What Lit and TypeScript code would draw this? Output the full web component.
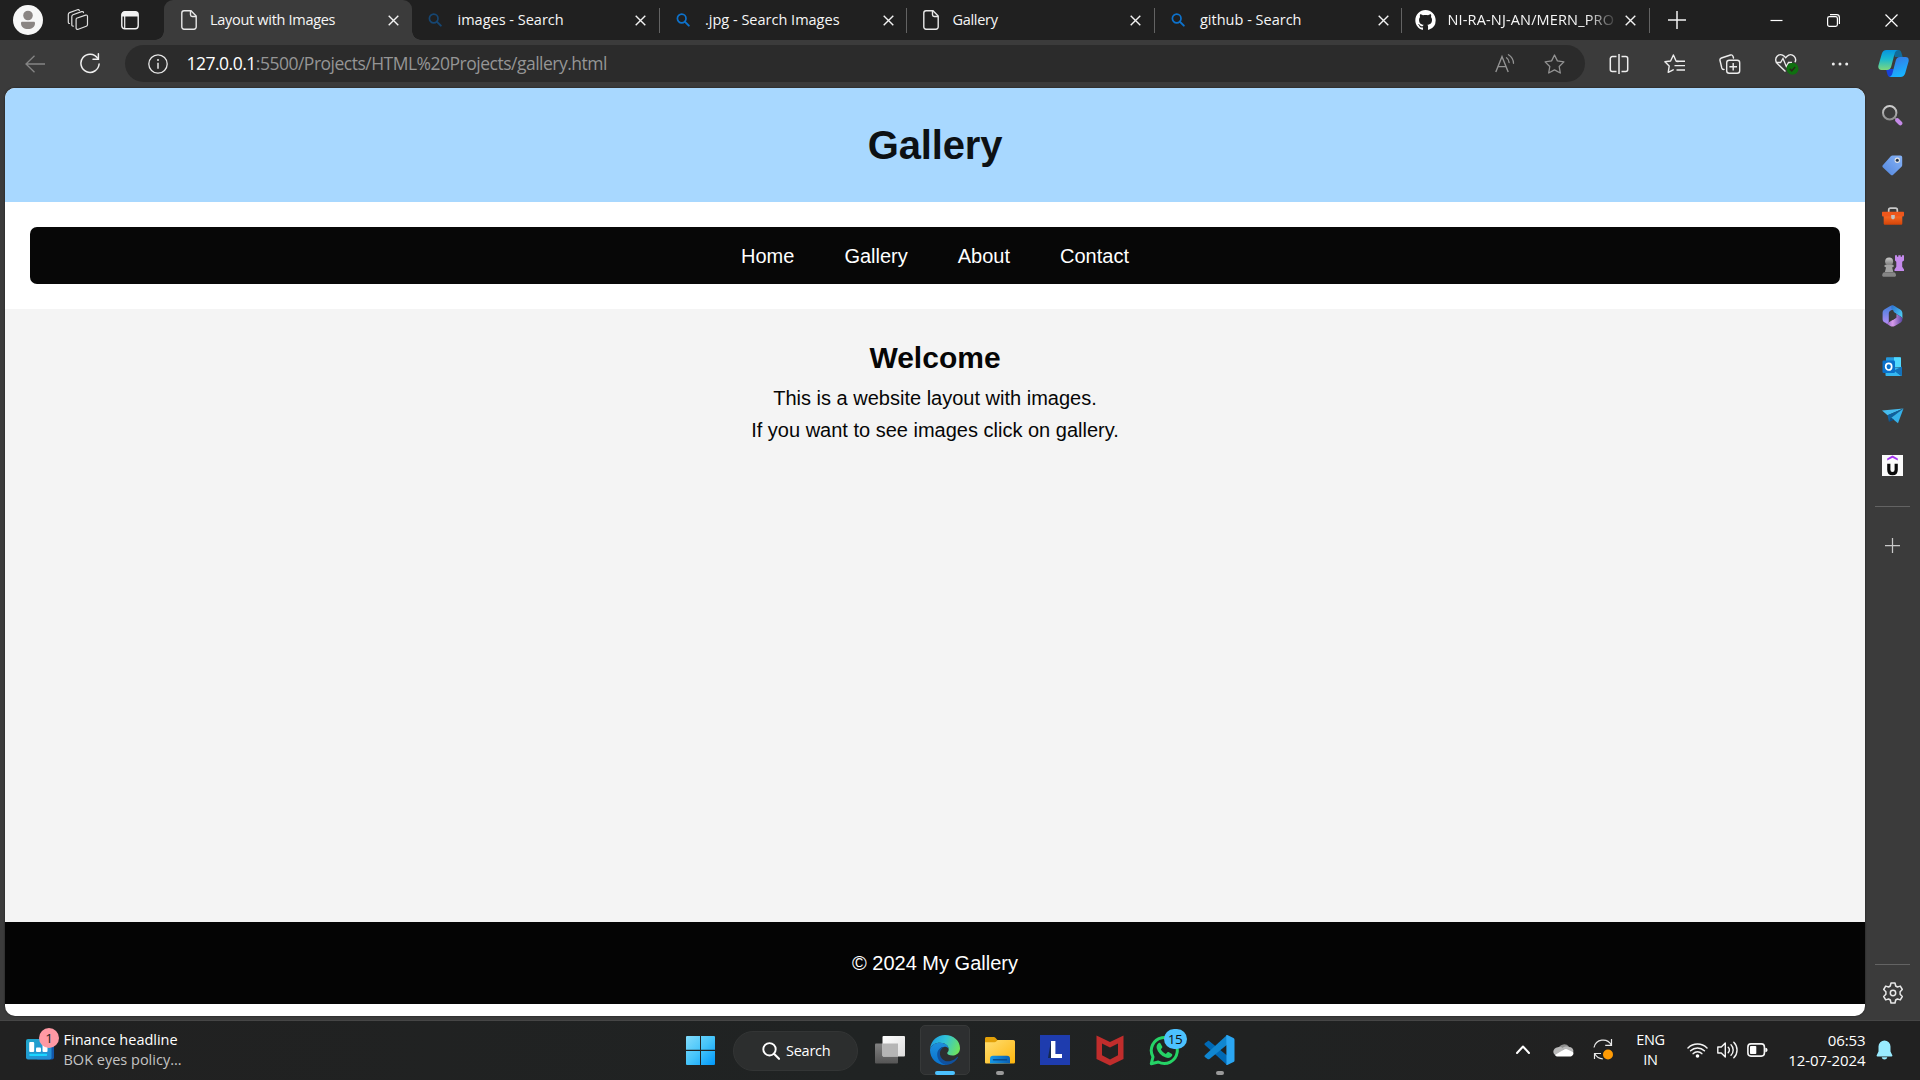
import { LitElement, html, svg, css, type TemplateResult } from "lit";
import { customElement } from "lit/decorators.js";

const icon = (w: number, h: number, body: TemplateResult) =>
  html`<svg class="icon" width=${w} height=${h} viewBox="0 0 ${w} ${h}" fill="none">${body}</svg>`;

/* ---------- tab strip ---------- */
const avatar = icon(30, 30, svg`<circle cx="15" cy="15" r="15" fill="#f7f7f7"/><circle cx="15" cy="10.5" r="4.8" fill="#8a8583"/><path d="M8 18.2c0-.9.6-1.4 1.4-1.4h11.2c.8 0 1.4.5 1.4 1.4 0 3.9-3 5.8-7 5.8s-7-1.9-7-5.8z" fill="#8a8583"/>`);
const workspaces = icon(22, 22, svg`<g stroke="#dedede" stroke-width="1.2" stroke-linejoin="round" stroke-linecap="round"><path d="M9.6 9.2l9-3.1c1-.3 1.9.1 1.9 1.2v8.2c0 .8-.4 1.4-1.2 1.7l-8 3c-1.2.4-2.2 0-2.2-1.2v-8.2c0-.8 0-1.4.5-1.6z"/><path d="M6.3 17.2c-1 .1-1.5-.4-1.5-1.3V7.8c0-1 .3-1.6 1.200-2l8.500-3.200c1-.3 1.800.1 2 1"/><path d="M2.500 14.500c-.8 0-1.200-.5-1.200-1.300V5.500c0-1 .4-1.600 1.200-1.900l8-2.900c.9-.3 1.600 0 1.900.8"/></g>`);
const tabMenu = icon(18, 19, svg`<rect x=".8" y=".8" width="16.400" height="17" rx="3" stroke="#f2f2f2" stroke-width="1.400"/><path d="M.8 3.800a3 3 0 0 1 3-3h10.400a3 3 0 0 1 3 3v1.700H.8z" fill="#f2f2f2"/><path d="M3.700 5v12" stroke="#f2f2f2" stroke-width="1.200"/>`);
const filePage = icon(16, 20, svg`<path d="M3 .8h7L15.200 6v11a2.200 2.200 0 0 1-2.200 2.200H3A2.200 2.200 0 0 1 .8 17V3A2.200 2.200 0 0 1 3 .8z" stroke="#e8e8e8" stroke-width="1.400"/><path d="M9.500 1v3.800c0 1 .6 1.700 1.700 1.700H15" stroke="#e8e8e8" stroke-width="1.400"/>`);
const bing = (c: string) => icon(14, 14, svg`<circle cx="5.700" cy="5.500" r="4.300" stroke=${c} stroke-width="1.700"/><path d="M8.800 8.600l4 4" stroke=${c} stroke-width="2" stroke-linecap="round"/>`);
const github = html`<svg class="icon" width="21" height="20" viewBox="0 0 16 15.700" fill="#fff"><path d="M8 0C3.580 0 0 3.580 0 8c0 3.540 2.290 6.530 5.470 7.590.4.070.55-.17.55-.38 0-.19-.01-.82-.01-1.490-2.010.37-2.530-.49-2.690-.94-.09-.23-.48-.94-.82-1.130-.28-.15-.68-.52-.01-.53.63-.01 1.080.58 1.230.82.72 1.210 1.870.87 2.330.66.07-.52.28-.87.51-1.070-1.780-.2-3.640-.89-3.640-3.950 0-.87.31-1.590.82-2.150-.08-.2-.36-1.020.08-2.120 0 0 .67-.21 2.200.82.64-.18 1.320-.27 2-.27s1.360.09 2 .27c1.530-1.040 2.200-.82 2.200-.82.44 1.100.16 1.920.08 2.120.51.56.82 1.270.82 2.150 0 3.070-1.870 3.750-3.650 3.950.29.25.54.73.54 1.480 0 1.070-.01 1.930-.01 2.200 0 .21.15.46.55.38A8.010 8.010 0 0 0 16 8c0-4.420-3.580-8-8-8z"/></svg>`;
const closeX = icon(11, 11, svg`<path d="M.7.7l9.600 9.600M10.300.7L.7 10.300" stroke="#f2f2f2" stroke-width="1.400"/>`);
const plus = (s: number, c: string) => html`<svg class="icon" width=${s} height=${s} viewBox="0 0 18 18"><path d="M9 0v18M0 9h18" stroke=${c} stroke-width="1.500"/></svg>`;
const minimise = icon(13, 13, svg`<path d="M.5 6.500h12" stroke="#fff" stroke-width="1.200"/>`);
const restore = icon(13, 13, svg`<rect x=".6" y="2.600" width="9.800" height="9.800" rx="1.800" stroke="#fff" stroke-width="1.200"/><path d="M3 .6h6.600a2.800 2.800 0 0 1 2.800 2.800V10" stroke="#fff" stroke-width="1.200"/>`);
const closeWin = icon(13, 13, svg`<path d="M.5.5l12 12M12.500.5l-12 12" stroke="#fff" stroke-width="1.200"/>`);

/* ---------- toolbar ---------- */
const back = icon(20, 18, svg`<path d="M9.500.7L1 9l8.500 8.300M1 9h19" stroke="#858585" stroke-width="1.300"/>`);
const reload = icon(20, 21, svg`<path d="M17.600 5.200A9.100 9.100 0 1 0 19.100 11" stroke="#f0f0f0" stroke-width="1.500" stroke-linecap="round"/><path d="M18.400.8v5.400H13" stroke="#f0f0f0" stroke-width="1.500" stroke-linecap="round"/>`);
const info = icon(20, 20, svg`<circle cx="10" cy="10" r="9.200" stroke="#e6e6e6" stroke-width="1.300"/><path d="M10 8.800v6" stroke="#e6e6e6" stroke-width="1.500"/><circle cx="10" cy="6" r="1" fill="#e6e6e6"/>`);
const readAloud = icon(20, 19, svg`<path d="M.8 18L7 2.600 13.200 18M2.900 12.600h8.200" stroke="#939393" stroke-width="1.400"/><path d="M11.500 3.800a6 6 0 0 1 2.600 4.700M13.500.7a10.500 10.500 0 0 1 5 8.600" stroke="#939393" stroke-width="1.300" stroke-linecap="round"/>`);
const star = icon(21, 20, svg`<path d="M10.500 1l2.900 5.900 6.500 1-4.700 4.600 1.100 6.500-5.800-3.100L4.700 19l1.100-6.500L1.100 7.900l6.500-1z" stroke="#939393" stroke-width="1.300" stroke-linejoin="round"/>`);
const split = icon(20, 20, svg`<path d="M7.500 2.600H3.300A2 2 0 0 0 1.300 4.600v10.800a2 2 0 0 0 2 2h4.200M12.500 2.600h4.200a2 2 0 0 1 2 2v10.800a2 2 0 0 1-2 2h-4.200M10 0v20" stroke="#ededed" stroke-width="1.500"/>`);
const favourites = icon(22, 20, svg`<path d="M14.200 7.500l-2-.3L9.400 1 6.600 7 .9 7.800l4.300 4.300-1 6.300 5-2.600" stroke="#ededed" stroke-width="1.400" stroke-linejoin="round" stroke-linecap="round"/><path d="M12.500 7.200h8.500M10.500 11.600h10.500M12.500 16h8.500" stroke="#ededed" stroke-width="1.400"/>`);
const collections = icon(22, 20, svg`<rect x="7.700" y="6.300" width="13" height="13" rx="2.500" stroke="#ededed" stroke-width="1.400"/><path d="M14.200 9v7.600M10.400 12.800H18" stroke="#ededed" stroke-width="1.400"/><path d="M5 15.400c-1.200.2-1.900-.3-2.200-1.400L1 6.500C.7 5.200 1.200 4.400 2.400 4L11.500 1c1.200-.4 2 .1 2.500 1.200l.5 1.800" stroke="#ededed" stroke-width="1.400" stroke-linecap="round"/>`);
const essentials = icon(24, 22, svg`<path d="M10.500 18.500L2.300 10.600a5.200 5.200 0 0 1-.2-7.300c2-2 5.100-2.100 7.200 0l1.400 1.400 1.400-1.400c2-2 5-2 7 0a5.200 5.200 0 0 1 .9 6" stroke="#ededed" stroke-width="1.400"/><path d="M.8 9.500h4.800l2.400-4 3.300 8 2.200-4h3.500" stroke="#ededed" stroke-width="1.300"/><circle cx="17.500" cy="15.800" r="6" fill="#0f7010"/><path d="M14.900 15.900l1.900 1.900 3.300-3.700" stroke="#29281b" stroke-width="1.500"/>`);
const dots = icon(18, 4, svg`<g fill="#ededed"><circle cx="2.300" cy="2" r="1.500"/><circle cx="9" cy="2" r="1.500"/><circle cx="15.700" cy="2" r="1.500"/></g>`);
const copilot = icon(31, 27, svg`<defs><linearGradient id="ca" x1="0" y1="0" x2="0" y2="1"><stop stop-color="#0794df"/><stop offset=".45" stop-color="#19b9d0"/><stop offset="1" stop-color="#7ed87c"/></linearGradient><linearGradient id="cb" x1="0" y1="0" x2=".4" y2="1"><stop stop-color="#3a71df"/><stop offset="1" stop-color="#18b2ff"/></linearGradient></defs><path d="M14 0h6.500c2 0 2.600 1.500 3 3l1.200 4H17z" fill="#116b9a"/><path d="M8 19h8l-1.500 8h-2.200c-2 0-2.600-1.500-3-3z" fill="#1741d8"/><path d="M8.500 0H20c-2.200.4-3 2-3.500 4l-3.200 12.200C12.700 18.500 11.500 20 9 20H3.500C.8 20-.2 18 .5 15.200L3.800 3.800C4.500 1.400 6 0 8.500 0z" fill="url(#ca)"/><path d="M22 7h5.500c2.700 0 3.700 2 3 4.800l-3.300 11.400C26.500 25.600 25 27 22.500 27H11c2.200-.4 3-2 3.500-4l3.200-12.200C18.300 8.500 19.500 7 22 7z" fill="url(#cb)"/>`);

/* ---------- sidebar ---------- */
const sbSearch = icon(21, 21, svg`<defs><linearGradient id="sg" x1="0" y1="0" x2="0" y2="1"><stop stop-color="#cfcfcf"/><stop offset="1" stop-color="#8e8e8e"/></linearGradient></defs><circle cx="7.700" cy="7.700" r="6.700" stroke="url(#sg)" stroke-width="2"/><path d="M12.800 12.800l2 2" stroke="#8a8a8a" stroke-width="1.600"/><path d="M15.300 15.300l3 3" stroke="#c58ae8" stroke-width="4.200" stroke-linecap="round"/>`);
const sbTag = icon(21, 21, svg`<defs><linearGradient id="tg" x1="1" y1="0" x2="0" y2="1"><stop stop-color="#87b3f6"/><stop offset="1" stop-color="#5286dd"/></linearGradient></defs><path d="M10.500.5h7.700c1.300 0 2 .7 2 2V10c0 .7-.2 1.200-.7 1.700l-8.300 8c-.8.7-1.700.7-2.500 0L1 12.500c-.8-.8-.8-1.700 0-2.500l8-8.900c.4-.4.9-.6 1.500-.6z" fill="url(#tg)"/><circle cx="15.300" cy="5.200" r="2.700" fill="#e2e2e2"/><circle cx="15.300" cy="5.200" r="1.500" fill="#20334c"/>`);
const sbTools = icon(22, 18, svg`<defs><linearGradient id="bg" x1="0" y1="0" x2="0" y2="1"><stop stop-color="#fa6d28"/><stop offset="1" stop-color="#d34408"/></linearGradient></defs><path d="M6.700 5.500V3c0-1.200.6-1.800 1.800-1.800h5c1.200 0 1.800.6 1.800 1.800v2.500" stroke="#c9c9c9" stroke-width="1.700"/><path d="M1.700 8h18.600v8.500c0 .8-.5 1.300-1.300 1.300H3c-.8 0-1.300-.5-1.300-1.300z" fill="url(#bg)"/><path d="M1 4.700h20c.7 0 1 .3 1 1v2.600c0 .8-.5 1.200-1.200 1.200H1.200C.5 9.500 0 9.100 0 8.300V5.700c0-.7.3-1 1-1z" fill="#ee571c"/><path d="M9.200 8h3.600v2.500c0 1-.8 1.800-1.800 1.800s-1.800-.8-1.800-1.800z" fill="#c4c4c4"/>`);
const sbGames = icon(22, 22, svg`<defs><linearGradient id="pg" x1="0" y1="0" x2="0" y2="1"><stop stop-color="#c9c9c9"/><stop offset="1" stop-color="#777"/></linearGradient></defs><path d="M13 .3h2v1.500h1.300V.3h2.400v1.500H20V.3h2v5.200l-1.800 1.200v5L22 14.500V16h-9.500v-1.500l1.800-2.800v-5L13 5.500z" fill="#c48aec"/><circle cx="7.100" cy="6.600" r="4" fill="url(#pg)"/><path d="M3.300 9.700h7.600c1.200 0 1.200 2.500 0 2.500h-.8l1.200 4.800H2.900l1.200-4.800h-.8c-1.200 0-1.200-2.500 0-2.500z" fill="#a2a2a2"/><path d="M2.700 17.300h8.800c1.700 0 2.500 1.500 2.500 3 0 .9-.4 1.400-1.200 1.400H1.400c-.8 0-1.200-.5-1.200-1.400 0-1.500.8-3 2.500-3z" fill="#858585"/>`);
const sbM365 = icon(21, 22, svg`<defs><linearGradient id="ma" x1="0" y1="0" x2="0" y2="1"><stop stop-color="#3f7fdc"/><stop offset="1" stop-color="#b18cf4"/></linearGradient><linearGradient id="mb" x1="0" y1="0" x2="1" y2="1"><stop stop-color="#2a6fd0"/><stop offset="1" stop-color="#52dcfb"/></linearGradient><linearGradient id="mc" x1="0" y1="0" x2="1" y2="0"><stop stop-color="#7a55c0"/><stop offset=".45" stop-color="#d79bea"/><stop offset="1" stop-color="#5a45a4"/></linearGradient></defs><path d="M10 .5c-.8 0-1.500.3-2.200.7L2.700 4.300C1.300 5.200.6 6.400.6 8v6c0 1.700.8 2.800 2.200 3.600l2 1c1.200-.2 2-1 2-2.200V8.500c0-1.200.5-2.100 1.500-2.700l6-3.300L12.300 1C11.600.6 10.800.5 10 .5z" fill="url(#ma)"/><path d="M9.500.6c1-.3 2 0 2.800.4l5.900 3.500c1.500.9 2.200 2.200 2.200 3.800v6c0-1.200-.7-2.200-1.800-2.900l-5-2.900c-1.300-.8-2-1.500-2.200-3L9.300 4z" fill="url(#mb)"/><path d="M2.800 17.600c1.200.6 2.500.5 3.700-.2l6.200-3.700c1-.6 1.400-1.400 1.400-2.600V9l4.500 2.500c2.500 1.500 2.300 4.700-.2 6.200l-5.600 3.200c-1.600.9-3 .9-4.600 0z" fill="url(#mc)"/><path d="M7 9l4-2.300 3.400 2.100v4L10.600 15 7 12.900z" fill="#3b3b3b"/>`);
const sbOutlook = icon(21, 21, svg`<path d="M5 1.200h13a1 1 0 0 1 1 1V11H4V2.200a1 1 0 0 1 1-1z" fill="#2499de"/><path d="M12 1.200h6a1 1 0 0 1 1 1V11h-7z" fill="#50d9ff"/><path d="M3.500 11L20 11.500v7a1.500 1.500 0 0 1-1.500 1.500h-14c-.6 0-1-.5-1-1z" fill="#32b6ee"/><path d="M20 10.500v8c0 .8-.6 1.500-1.500 1.500L12 14.500z" fill="#1372bb"/><path d="M3.500 20l8.500-4.500 7 4.500z" fill="#35b8f1"/><rect x=".5" y="4.500" width="12.500" height="12.500" rx="1.300" fill="#0a70ca"/><ellipse cx="6.700" cy="10.700" rx="3" ry="3.300" stroke="#fff" stroke-width="1.700"/>`);
const sbTelegram = icon(22, 16, svg`<path d="M21.500.5L0 2.500l5.500 4.700z" fill="#45bcef"/><path d="M21.500.5L5.500 7.200 7 14l2.200-4.300z" fill="#0e609f"/><path d="M21.500.5L9.200 9.700 16 15.200z" fill="#35b1ea"/><path d="M7 14l2.200-4.300 2.800 2z" fill="#0a4e88"/>`);
const sbUdemy = icon(21, 21, svg`<path d="M0 0h21v21H0z" fill="#fbfbfb"/><path d="M5.200 5.600V3.400L10.500.5l5.300 2.900v2.200l-5.300-2.800z" fill="#a435f0"/><path d="M6.800 8.800v6c0 2.300 1.400 3.900 3.700 3.900s3.700-1.600 3.700-3.900v-6" stroke="#0a0a0a" stroke-width="3.200"/>`);
const gear = icon(22, 22, svg`<path d="M9 1h4l.7 3 1.700 1 2.900-.9 2 3.400L18.100 9.700v2.600l2.200 2.200-2 3.400-2.900-.9-1.700 1L13 21H9l-.7-3-1.700-1-2.900.9-2-3.400 2.200-2.200V9.700L1.700 7.500l2-3.400 2.900.9 1.700-1z" stroke="#e8e8e8" stroke-width="1.500" stroke-linejoin="round"/><circle cx="11" cy="11" r="2.700" stroke="#e8e8e8" stroke-width="1.500"/>`);

/* ---------- taskbar ---------- */
const widgets = icon(29, 21, svg`<defs><linearGradient id="wa" x1="0" y1="0" x2="1" y2="1"><stop stop-color="#20a6c9"/><stop offset="1" stop-color="#238bd8"/></linearGradient></defs><rect x="10" y="1" width="18" height="19.500" rx="2" fill="#1257a8"/><rect x="0" y="0" width="25.500" height="20.500" rx="2" fill="url(#wa)"/><g fill="#fff"><rect x="3.200" y="3" width="5" height="10" rx="1"/><rect x="10" y="8.500" width="5" height="4.500" rx="1"/><rect x="16.500" y="4.500" width="5" height="8.500" rx="1"/></g><rect x="3.200" y="14.700" width="18" height="2.300" rx="1" fill="#1bd5ff"/>`);
const start = icon(29, 29, svg`<defs><linearGradient id="ws" gradientUnits="userSpaceOnUse" x1="0" y1="0" x2="29" y2="29"><stop stop-color="#83dcfb"/><stop offset=".5" stop-color="#45c4fa"/><stop offset="1" stop-color="#0098fa"/></linearGradient></defs><path d="M1 0h13v13.800H0V1a1 1 0 0 1 1-1zM15 0h13a1 1 0 0 1 1 1v12.800H15zM0 15h14v14H1a1 1 0 0 1-1-1zM15 15h14v13a1 1 0 0 1-1 1H15z" fill="url(#ws)"/>`);
const lens = icon(18, 18, svg`<circle cx="7.500" cy="7.300" r="6.200" stroke="#fff" stroke-width="1.900"/><path d="M12 11.800l5 5" stroke="#fff" stroke-width="2.100" stroke-linecap="round"/>`);
const taskView = icon(30, 28, svg`<defs><linearGradient id="tv" x1="0" y1="0" x2="1" y2="1"><stop stop-color="#fff"/><stop offset="1" stop-color="#dcdcdc"/></linearGradient><linearGradient id="tw" x1="0" y1="0" x2="0" y2="1"><stop stop-color="#818181"/><stop offset="1" stop-color="#555"/></linearGradient></defs><rect x="0" y="7.500" width="23" height="20" rx="1" fill="url(#tw)"/><rect x="7.500" y="0" width="22.500" height="20.500" rx="1" fill="url(#tv)"/><path d="M7.500 7.500H23v13H8.500a1 1 0 0 1-1-1z" fill="#b5b5b5"/>`);
const edge = html`<svg class="icon" width="30" height="30" viewBox="0 0 30 30"><defs>
  <linearGradient id="ea" x1="0" y1=".3" x2="1" y2=".6"><stop stop-color="#1b9de2"/><stop offset=".45" stop-color="#31c3d8"/><stop offset="1" stop-color="#6fe35c"/></linearGradient>
  <linearGradient id="eb" x1="0" y1="0" x2="0" y2="1"><stop stop-color="#1e8fdc"/><stop offset="1" stop-color="#0873cf"/></linearGradient></defs>
  <path d="M0 14C1 5.500 7.300 0 15 0c8.700 0 15 6 15 13.200 0 4.200-3.200 7.300-7.600 7.300-3.300 0-5.200-1.300-5.200-2.500 0-.8 1.500-1.300 1.500-3.600C18.700 10.500 15 7.700 10 7.700 5 7.700 1.200 10 0 14z" fill="url(#ea)"/>
  <path d="M0 15c.5-4.800 5.200-7.300 10-7.300 4.700 0 8.200 2.400 8.700 5.700-1-1-2.500-1.600-4-1.600-4 0-6.500 3.200-6.500 7.200 0 5.400 4 9.500 8.800 11h-2C6.700 30 0 23.500 0 15z" fill="url(#eb)"/>
  <path d="M14.200 11.900c-3 1.300-4.700 4-4.200 7.500.8 5 5.600 7.800 10.400 6.600 3-.7 5.300-2.200 6.800-4 .6-.7 1.200-.3.700.6C25.600 27 20.800 30 16.300 30 11.500 29.300 7.200 24.800 7.200 19.500c0-4.500 3.200-7.500 7-7.600z" fill="#10519e"/></svg>`;
const explorer = icon(30, 27, svg`<defs><linearGradient id="fa" x1="0" y1="0" x2="1" y2="1"><stop stop-color="#ffde72"/><stop offset="1" stop-color="#fdb50d"/></linearGradient><linearGradient id="fb" x1="0" y1="0" x2="1" y2="0"><stop stop-color="#1498e7"/><stop offset="1" stop-color="#0b60b4"/></linearGradient></defs><path d="M0 1.500C0 .6.600 0 1.500 0h7.300c.7 0 1.200.2 1.600.7l2 2.300h15.100c1.500 0 2.500 1 2.500 2.500V8H0z" fill="#e2a008"/><path d="M0 5.200h9.500c.7 0 1.200-.2 1.700-.7l1.500-1.500H28c1.300 0 2 .7 2 2v20c0 1-.6 1.600-1.600 1.600H1.600C.6 26.600 0 26 0 25z" fill="url(#fa)"/><path d="M5 26.600V22c0-2 1-3.200 3-3.200h14c2 0 3 1.200 3 3.200v4.600z" fill="url(#fb)"/><path d="M8.500 22.800h13" stroke="#084b8c" stroke-width="1.500" stroke-linecap="round"/>`);
const lenovo = icon(30, 30, svg`<path d="M0 0h30v30H0z" fill="#1e3cae"/><path d="M11 6l-3 17h7z" fill="#15294f"/><path d="M11 6h4.400v13H22v4H11z" fill="#fff"/>`);
const mcafee = icon(28, 31, svg`<path d="M.5.500L14 7 27.500.500V24L14 30.500.500 24z" fill="#c02d2c"/><path d="M6 8.500L14 12.400l8-3.900v11.800l-8 4.200-8-4.200z" fill="#212222"/>`);
const whatsapp = icon(31, 31, svg`<path d="M2.300 28.700L4 21.900A13 13 0 1 1 9.300 27z" stroke="#25d366" stroke-width="3" stroke-linejoin="round"/><path d="M9.400 8.200c.6-.6 1.400-.7 2 0l1.800 3.300c.3.600.1 1-.3 1.500l-1 1.300c1 2 2.600 3.500 4.900 4.600l1.500-1.400c.5-.5 1-.6 1.600-.2l3 1.700c.6.500.5 1.200 0 1.900-1.300 1.800-3.500 2.500-6 1.600-5-1.700-8-5-9.100-9-.6-2.200.2-4 1.600-5.300z" fill="#25d366"/>`);
const vscode = icon(31, 30, svg`<path d="M1.500 7.700l2-1.500c.7-.5 1.300-.4 2 .1L23 20.500V30L.9 10c-.9-.9-.4-1.500.6-2.300z" fill="#0069b5"/><path d="M1.500 22.500l2 1.500c.7.500 1.300.4 2-.1L23 9.700V0L.9 20.200c-.9.900-.4 1.500.6 2.300z" fill="#1086d0"/><path d="M22.300.2c.5-.3 1-.2 1.500 0l5.700 2.900c.7.300 1 .9 1 1.600v20.700c0 .7-.3 1.200-1 1.600l-5.700 2.800c-.7.300-1.300.2-1.800-.2L22.500 29z" fill="#2ba6f2"/>`);
const chevron = icon(14, 9, svg`<path d="M1 8l6-6.500L13 8" stroke="#fff" stroke-width="2" stroke-linecap="round" stroke-linejoin="round"/>`);
const cloud = icon(21, 14, svg`<path d="M5.500 5.500a6 6 0 0 1 10.500-1.700l-8 6z" fill="#8e8e8e"/><path d="M4.800 4.200A5 5 0 0 1 10.500 6l-5 6.600C2.500 13 .3 11.300.3 8.800c0-2.400 1.900-4.400 4.500-4.600z" fill="#b9b9b9"/><path d="M16 4c2.800 0 4.500 2 4.500 4.500L18 10 9 5.500C10.800 3.500 13.500 3 16 4z" fill="#b9b9b9"/><path d="M2 12l8.500-5.200a5 5 0 0 1 3.500-.6l6.300 3c.6 2.500-1.200 4.300-3.500 4.300H4.900C3.700 13.500 2.700 13 2 12z" fill="#fff"/>`);
const sync = icon(21, 21, svg`<path d="M1 8.500A9.300 9.300 0 0 1 18.300 6M18.500 0v6.300h-6.300M1.500 20v-5.500H8M1.800 14.800a9.300 9.300 0 0 0 8 5" stroke="#e8e8e8" stroke-width="1.200"/><circle cx="15" cy="15.500" r="5" fill="#ff9b05"/>`);
const wifi = icon(21, 16, svg`<g stroke="#f4f4f4" stroke-width="1.500" stroke-linecap="round"><path d="M1 6a13.500 13.500 0 0 1 19 0M3.600 8.800a9.800 9.800 0 0 1 13.800 0M6.200 11.600a6 6 0 0 1 8.600 0"/></g><circle cx="10.500" cy="14" r="1.800" fill="#fff"/>`);
const volume = icon(21, 18, svg`<path d="M.8 6h3.500l4-4v14l-4-4H.8z" stroke="#f4f4f4" stroke-width="1.400" stroke-linejoin="round"/><path d="M11.200 6.300a4 4 0 0 1 0 5.400M14 3.700a7.500 7.500 0 0 1 0 10.600M16.800 1.200a11 11 0 0 1 0 15.600" stroke="#f4f4f4" stroke-width="1.400" stroke-linecap="round"/>`);
const battery = icon(21, 14, svg`<rect x=".9" y=".9" width="16.500" height="12.200" rx="3" stroke="#f4f4f4" stroke-width="1.600"/><rect x="3" y="3" width="6.300" height="8" rx=".8" fill="#fff"/><path d="M18.300 4.800c1.300 0 2.200.8 2.200 2.200s-.9 2.200-2.200 2.200z" fill="#fff"/>`);
const bell = icon(17, 20, svg`<path d="M8.500.5a6 6 0 0 1 6 6v5l1.800 3.700c.3.700 0 1.200-.7 1.200H1.400c-.7 0-1-.5-.7-1.200l1.800-3.700v-5a6 6 0 0 1 6-6zM5.700 17.200h5.600c-.4 1.500-1.400 2.200-2.800 2.200s-2.400-.7-2.800-2.200z" fill="#99ebff"/>`);

interface Tab {
  title: string;
  glyph: TemplateResult;
  kind: "page" | "site" | "repo";
  active?: boolean;
}

@customElement("browser-tabs")
class BrowserTabs extends LitElement {
  static styles = css`
    :host { display: flex; height: 40px; background: #202020; color: #f6f6f6; font-family: "Open Sans", "Noto Sans", sans-serif; }
    .icon { display: block; flex: none; }
    .lead { width: 151px; padding-left: 13px; display: flex; align-items: center; }
    .lead .gap1 { margin-left: 24px; }
    .lead .gap2 { margin-left: 32px; }
    .tab { width: 247.5px; box-sizing: border-box; padding: 0 13px 0 16.5px; display: flex; align-items: center; position: relative; flex: none; }
    .tab.active { background: #3b3b3b; border-radius: 9px 9px 0 0; }
    .tab.active::before, .tab.active::after { content: ""; position: absolute; bottom: 0; width: 9px; height: 9px; }
    .tab.active::before { left: -9px; background: radial-gradient(circle at 0 0, transparent 8.5px, #3b3b3b 9px); }
    .tab.active::after { right: -9px; background: radial-gradient(circle at 100% 0, transparent 8.5px, #3b3b3b 9px); }
    .rule { position: absolute; right: -0.5px; top: 8px; width: 1px; height: 25px; background: #636363; }
    .fav { width: 29.5px; flex: none; display: flex; }
    .repo .fav { margin-left: -3px; width: 32.5px; }
    .title { flex: 1; font-size: 14.5px; line-height: 20px; white-space: nowrap; letter-spacing: -0.3px; }
    .site .title { letter-spacing: 0; }
    .repo .title { letter-spacing: 0.15px; mask-image: linear-gradient(90deg, #000 82%, transparent 101%); margin-right: 8px; }
    .close { width: 11px; }
    .wins { display: flex; align-items: center; margin-left: auto; gap: 44.5px; padding-right: 22.5px; }
    .new { display: flex; align-items: center; padding-left: 19px; }
  `;
  tabs: Tab[] = [
    { title: "Layout with Images", glyph: filePage, kind: "page", active: true },
    { title: "images - Search", glyph: bing("#164672"), kind: "site" },
    { title: ".jpg - Search Images", glyph: bing("#0d72cc"), kind: "site" },
    { title: "Gallery", glyph: filePage, kind: "page" },
    { title: "github - Search", glyph: bing("#0d72cc"), kind: "site" },
    { title: "NI-RA-NJ-AN/MERN_PRO", glyph: github, kind: "repo" },
  ];
  render() {
    return html`
      <div class="lead">${avatar}<span class="gap1">${workspaces}</span><span class="gap2">${tabMenu}</span></div>
      ${this.tabs.map(
        (t) => html`<div class="tab ${t.kind} ${t.active ? "active" : ""}">
          <span class="fav">${t.glyph}</span><span class="title">${t.title}</span><span class="close">${closeX}</span>
          ${t.active ? null : html`<i class="rule"></i>`}
        </div>`
      )}
      <div class="new">${plus(18, "#f2f2f2")}</div>
      <div class="wins">${minimise}${restore}${closeWin}</div>
    `;
  }
}

@customElement("browser-toolbar")
class BrowserToolbar extends LitElement {
  static styles = css`
    :host { display: flex; height: 48px; box-sizing: border-box; padding: 5px 0 6px 25px; align-items: center; background: #3b3b3b; font-family: "Open Sans", "Noto Sans", sans-serif; }
    .icon { display: block; flex: none; }
    .reload { margin-left: 35px; }
    .address { margin-left: 25px; width: 1460px; flex: none; height: 37px; box-sizing: border-box; padding: 0 20.5px 0 22.5px; border-radius: 19px; background: #2b2b2b; display: flex; align-items: center; }
    .url { margin-left: 19px; font-size: 17.5px; line-height: 24px; padding-bottom: 1px; color: #959595; letter-spacing: -0.5px; white-space: nowrap; flex: 1; }
    .host { color: #fff; }
    .star { margin-left: 29px; }
    .tools { display: flex; margin-left: 6.5px; flex: none; }
    .slot { width: 55px; box-sizing: border-box; display: flex; align-items: center; justify-content: center; flex: none; }
    .slot:nth-child(2), .slot:nth-child(3), .slot:nth-child(5) { padding-left: 2px; }
    .slot:nth-child(4) { padding-left: 5px; }
    .slot:last-child { width: 53.5px; }
  `;
  render() {
    return html`
      ${back}<span class="reload">${reload}</span>
      <div class="address">
        ${info}<span class="url"><span class="host">127.0.0.1</span>:5500/Projects/HTML%20Projects/gallery.html</span>
        ${readAloud}<span class="star">${star}</span>
      </div>
      <div class="tools">
        ${[split, favourites, collections, essentials, dots, copilot].map((i) => html`<span class="slot">${i}</span>`)}
      </div>
    `;
  }
}

@customElement("gallery-page")
class GalleryPage extends LitElement {
  static styles = css`
    :host { display: flex; flex-direction: column; width: 1860px; height: 927.5px; background: #fff; border-radius: 10px; overflow: hidden; box-shadow: 0 0 2px rgba(0, 0, 0, 0.6); font: 20px/32px "Liberation Sans", Arial, sans-serif; color: #060606; text-align: center; }
    .header { background: #a8d8ff; padding: 25px; }
    h1, h2, p { margin: 0; }
    h1 { font-size: 40px; line-height: 64px; color: #0d1114; letter-spacing: -0.15px; }
    h2 { font-size: 30px; line-height: 48px; }
    .nav { margin: 25px; padding: 12.5px; background: #070707; color: #fff; border-radius: 7px; display: flex; justify-content: center; gap: 50px; }
    .main { height: 563px; padding: 25px; background: #f4f4f4; }
    .footer { background: #040404; color: #fff; padding: 25px; }
  `;
  render() {
    return html`
      <div class="header"><h1>Gallery</h1></div>
      <div class="nav">${["Home", "Gallery", "About", "Contact"].map((n) => html`<span>${n}</span>`)}</div>
      <div class="main">
        <h2>Welcome</h2>
        <p>This is a website layout with images.</p>
        <p>If you want to see images click on gallery.</p>
      </div>
      <div class="footer">© 2024 My Gallery</div>
    `;
  }
}

@customElement("browser-sidebar")
class BrowserSidebar extends LitElement {
  static styles = css`
    :host { display: flex; flex-direction: column; align-items: center; width: 55px; box-sizing: border-box; padding-top: 2px; height: 932px; }
    .icon { display: block; }
    .slot { height: 50px; display: flex; align-items: center; justify-content: center; flex: none; }
    .slot:nth-child(2) { height: 51px; }
    .slot:nth-child(8) { height: 49px; }
    .line { width: 35px; height: 1px; background: #636363; flex: none; }
    .line.first { margin: 16px 0 13px; }
    .line.last { margin-top: auto; }
    .gear { height: 55px; }
  `;
  render() {
    return html`
      ${[sbSearch, sbTag, sbTools, sbGames, sbM365, sbOutlook, sbTelegram, sbUdemy].map((i) => html`<span class="slot">${i}</span>`)}
      <i class="line first"></i><span class="slot">${plus(15, "#c9c9c9")}</span>
      <i class="line last"></i><span class="slot gear">${gear}</span>
    `;
  }
}

@customElement("desktop-taskbar")
class DesktopTaskbar extends LitElement {
  static styles = css`
    :host { display: grid; grid-template-columns: 673px 1fr 404px; height: 60px; box-sizing: border-box; border-top: 1px solid #464646; background: linear-gradient(90deg, #212121, #202323 45%, #202222 65%, #212121 85%); color: #fff; font-family: "Open Sans", "Noto Sans", sans-serif; font-size: 14.5px; line-height: 20px; }
    .icon { display: block; flex: none; }
    .news { display: flex; align-items: center; padding: 0 0 2px 26px; }
    .glyph { position: relative; width: 37.5px; }
    .badge { position: absolute; left: 13px; top: -11.5px; width: 20px; height: 20px; border-radius: 10px; background: #ff99a4; color: #222; text-align: center; font-size: 13.5px; line-height: 20px; }
    .lines { letter-spacing: 0; white-space: nowrap; }
    .soft { color: #c4c4c4; }
    .apps { display: flex; align-items: center; padding-bottom: 1px; }
    .app { width: 55px; height: 50px; display: flex; align-items: center; justify-content: center; position: relative; }
    .app.open::after { content: ""; position: absolute; left: 23.5px; bottom: 0.5px; width: 8px; height: 4px; border-radius: 2px; background: #9a9a9a; }
    .app.current::before { content: ""; position: absolute; inset: 0 2.5px; box-sizing: border-box; border: 1px solid #373939; border-radius: 5px; background: #2d2f30; }
    .app.current::after { left: 17.5px; width: 20px; background: #4cc2ff; }
    .app.current .icon { position: relative; }
    .pill { width: 125px; height: 40px; box-sizing: border-box; border: 1px solid #333535; border-radius: 20px; background: #2c2e2e; margin: 1px 4px 0 5px; display: flex; align-items: center; padding-left: 28px; gap: 6px; letter-spacing: -0.25px; }
    .count { position: absolute; left: 26.5px; top: 3.5px; width: 23px; height: 20px; border-radius: 10px; background: #4cc2ff; color: #111; text-align: center; font-size: 13.5px; letter-spacing: -0.5px; }
    .tray { display: flex; align-items: center; padding-bottom: 2px; }
    .lang { width: 40px; margin-left: 17px; text-align: center; letter-spacing: -0.3px; }
    .cloud { margin-left: 22.5px; }
    .sync { margin-left: 19px; }
    .wifi { margin-left: 16.5px; }
    .vol, .bat { margin-left: 9px; }
    .clock { width: 97.5px; text-align: right; font-size: 15px; letter-spacing: -0.1px; white-space: nowrap; }
    .bell { margin-left: 10.5px; }
  `;
  render() {
    return html`
      <div class="news">
        <span class="glyph">${widgets}<span class="badge">1</span></span>
        <div class="lines"><div>Finance headline</div><div class="soft">BOK eyes policy...</div></div>
      </div>
      <div class="apps">
        <span class="app">${start}</span>
        <span class="pill">${lens}<span>Search</span></span>
        <span class="app">${taskView}</span>
        <span class="app open current">${edge}</span>
        <span class="app open">${explorer}</span>
        <span class="app">${lenovo}</span>
        <span class="app">${mcafee}</span>
        <span class="app">${whatsapp}<span class="count">15</span></span>
        <span class="app open">${vscode}</span>
      </div>
      <div class="tray">
        ${chevron}<span class="cloud">${cloud}</span><span class="sync">${sync}</span>
        <div class="lang"><div>ENG</div><div>IN</div></div>
        <span class="wifi">${wifi}</span><span class="vol">${volume}</span><span class="bat">${battery}</span>
        <div class="clock"><div>06:53</div><div>12-07-2024</div></div>
        <span class="bell">${bell}</span>
      </div>
    `;
  }
}

@customElement("app-root")
class AppRoot extends LitElement {
  static styles = css`
    :host { display: flex; flex-direction: column; width: 1920px; height: 1080px; overflow: hidden; background: #3b3b3b; }
    .body { display: flex; padding-left: 5px; height: 932px; }
  `;
  render() {
    return html`
      <browser-tabs></browser-tabs>
      <browser-toolbar></browser-toolbar>
      <div class="body"><gallery-page></gallery-page><browser-sidebar></browser-sidebar></div>
      <desktop-taskbar></desktop-taskbar>
    `;
  }
}
